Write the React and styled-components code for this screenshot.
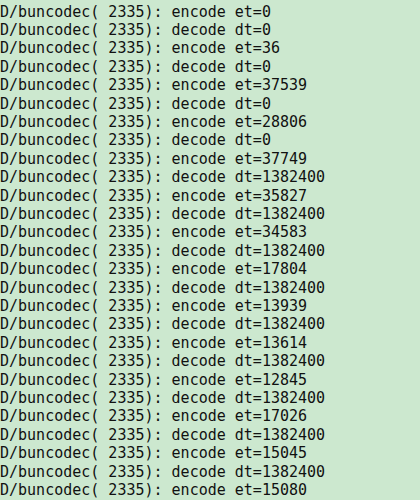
import React from "react";
import styled, { createGlobalStyle } from "styled-components";

const GlobalStyle = createGlobalStyle`
  html, body {
    margin: 0;
    padding: 0;
    background: #cce8cf;
  }
`;

const lines = [
  "encode et=0",
  "decode dt=0",
  "encode et=36",
  "decode dt=0",
  "encode et=37539",
  "decode dt=0",
  "encode et=28806",
  "decode dt=0",
  "encode et=37749",
  "decode dt=1382400",
  "encode et=35827",
  "decode dt=1382400",
  "encode et=34583",
  "decode dt=1382400",
  "encode et=17804",
  "decode dt=1382400",
  "encode et=13939",
  "decode dt=1382400",
  "encode et=13614",
  "decode dt=1382400",
  "encode et=12845",
  "decode dt=1382400",
  "encode et=17026",
  "decode dt=1382400",
  "encode et=15045",
  "decode dt=1382400",
  "encode et=15080",
];

function App() {
  return (
    <>
      <GlobalStyle />
      <LogView>
        {lines.map((msg, i) => (
          <LogLine key={i}>D/buncodec( 2335): {msg}</LogLine>
        ))}
      </LogView>
    </>
  );
}

const LogView = styled.pre`
  margin: 0;
  padding: 2.5px 0 0 0;
  width: 420px;
  height: 500px;
  overflow: hidden;
  background: #cce8cf;
  color: #111;
  font-family: "DejaVu Sans Mono", "Liberation Mono", monospace;
  font-size: 15px;
  line-height: 18.4px;
`;

const LogLine = styled.div`
  white-space: pre;
`;

export default App;
